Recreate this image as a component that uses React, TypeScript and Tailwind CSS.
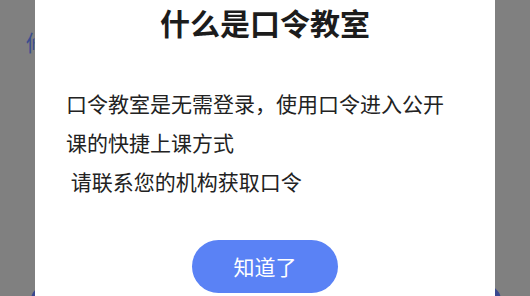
export default function App() {
  return (
    <div
      className="relative w-[530px] h-[296px] overflow-hidden bg-[#808080] flex justify-center"
      style={{ fontFamily: '"Noto Sans CJK SC", "Noto Sans", sans-serif' }}
    >
      {/* page content peeking out behind the dialog */}
      <span className="absolute left-[26px] top-[30px] text-[22px] leading-none text-[#3b4d8e]">修</span>
      <div className="absolute left-[31px] right-[29px] top-[286px] h-[40px] rounded-[14px] bg-[#3a4890]" />

      <div className="relative z-10 w-[460px] h-full bg-white flex flex-col items-center">
        <h1 className="h-[44px] leading-[44px] text-[30px] font-bold text-[#1c1c1c]">什么是口令教室</h1>

        <div className="mt-[40px] w-full pl-[31px] text-[21px] leading-[39px] text-[#222222] whitespace-pre">
          <p>口令教室是无需登录，使用口令进入公开</p>
          <p>课的快捷上课方式</p>
          <p> 请联系您的机构获取口令</p>
        </div>

        <button className="mt-[39px] w-[146px] h-[53px] rounded-full bg-[#5a82f5] text-white text-[21px] flex items-center justify-center">
          知道了
        </button>
      </div>
    </div>
  )
}
